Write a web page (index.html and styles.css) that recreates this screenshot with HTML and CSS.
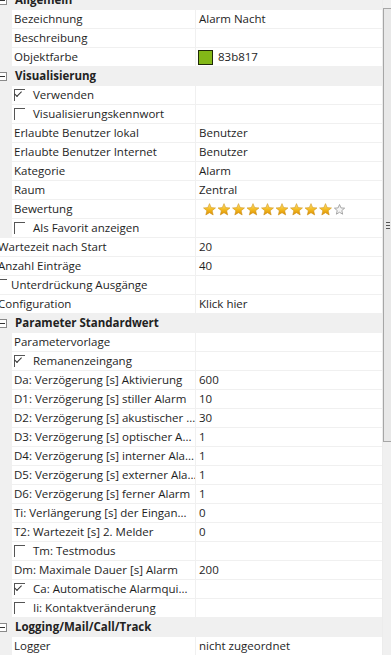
FILE: index.html
```html
<!DOCTYPE html>
<html lang="de">
<head>
  <meta charset="UTF-8">
  <title>Eigenschaften</title>
  <link rel="stylesheet" href="styles.css">
</head>
<body>

<svg width="0" height="0" class="defs">
  <defs>
    <linearGradient id="gold" x1="0" y1="0" x2="0" y2="1">
      <stop offset="0" stop-color="#fde27a"/>
      <stop offset="0.55" stop-color="#f3b81c"/>
      <stop offset="1" stop-color="#d98c06"/>
    </linearGradient>
    <polygon id="star" points="6.5,0.6 8.2,4.6 12.5,4.9 9.2,7.7 10.2,12 6.5,9.7 2.8,12 3.8,7.7 0.5,4.9 4.8,4.6"/>
  </defs>
</svg>

<div class="window">
  <div class="grid">

    <div class="row head"><span class="exp"></span><span class="htext">Allgemein</span></div>
    <div class="row"><div class="gut"></div><div class="label">Bezeichnung</div><div class="value">Alarm Nacht</div></div>
    <div class="row"><div class="gut"></div><div class="label">Beschreibung</div><div class="value"></div></div>
    <div class="row"><div class="gut"></div><div class="label">Objektfarbe</div><div class="value"><span class="swatch"></span>83b817</div></div>

    <div class="row head"><span class="exp"></span><span class="htext">Visualisierung</span></div>
    <div class="row"><div class="gut"></div><div class="label"><span class="cb on"></span>Verwenden</div><div class="value"></div></div>
    <div class="row"><div class="gut"></div><div class="label"><span class="cb"></span>Visualisierungskennwort</div><div class="value"></div></div>
    <div class="row"><div class="gut"></div><div class="label">Erlaubte Benutzer lokal</div><div class="value">Benutzer</div></div>
    <div class="row"><div class="gut"></div><div class="label">Erlaubte Benutzer Internet</div><div class="value">Benutzer</div></div>
    <div class="row"><div class="gut"></div><div class="label">Kategorie</div><div class="value">Alarm</div></div>
    <div class="row"><div class="gut"></div><div class="label">Raum</div><div class="value">Zentral</div></div>
    <div class="row"><div class="gut"></div><div class="label">Bewertung</div>
      <div class="value stars">
        <svg width="150" height="14" viewBox="0 0 150 14">
          <use href="#star" x="0" y="1" fill="url(#gold)" stroke="#c98a10" stroke-width="0.5"/>
          <use href="#star" x="14.5" y="1" fill="url(#gold)" stroke="#c98a10" stroke-width="0.5"/>
          <use href="#star" x="29" y="1" fill="url(#gold)" stroke="#c98a10" stroke-width="0.5"/>
          <use href="#star" x="43.5" y="1" fill="url(#gold)" stroke="#c98a10" stroke-width="0.5"/>
          <use href="#star" x="58" y="1" fill="url(#gold)" stroke="#c98a10" stroke-width="0.5"/>
          <use href="#star" x="72.5" y="1" fill="url(#gold)" stroke="#c98a10" stroke-width="0.5"/>
          <use href="#star" x="87" y="1" fill="url(#gold)" stroke="#c98a10" stroke-width="0.5"/>
          <use href="#star" x="101.5" y="1" fill="url(#gold)" stroke="#c98a10" stroke-width="0.5"/>
          <use href="#star" x="116" y="1" fill="url(#gold)" stroke="#c98a10" stroke-width="0.5"/>
          <use href="#star" x="131" y="2" fill="#f4f4f4" stroke="#9a9a9a" stroke-width="1" transform="translate(131 2) scale(0.85) translate(-131 -2)"/>
        </svg>
      </div>
    </div>
    <div class="row"><div class="gut"></div><div class="label"><span class="cb"></span>Als Favorit anzeigen</div><div class="value"></div></div>

    <div class="row flat"><div class="label">Wartezeit nach Start</div><div class="value">20</div></div>
    <div class="row flat"><div class="label">Anzahl Einträge</div><div class="value">40</div></div>
    <div class="row flat"><div class="label"><span class="cb"></span>Unterdrückung Ausgänge</div><div class="value"></div></div>
    <div class="row flat"><div class="label">Configuration</div><div class="value">Klick hier</div></div>

    <div class="row head"><span class="exp"></span><span class="htext">Parameter Standardwert</span></div>
    <div class="row"><div class="gut"></div><div class="label">Parametervorlage</div><div class="value"></div></div>
    <div class="row"><div class="gut"></div><div class="label"><span class="cb on"></span>Remanenzeingang</div><div class="value"></div></div>
    <div class="row"><div class="gut"></div><div class="label">Da: Verzögerung [s] Aktivierung</div><div class="value">600</div></div>
    <div class="row"><div class="gut"></div><div class="label">D1: Verzögerung [s] stiller Alarm</div><div class="value">10</div></div>
    <div class="row"><div class="gut"></div><div class="label">D2: Verzögerung [s] akustischer ...</div><div class="value">30</div></div>
    <div class="row"><div class="gut"></div><div class="label">D3: Verzögerung [s] optischer A...</div><div class="value">1</div></div>
    <div class="row"><div class="gut"></div><div class="label">D4: Verzögerung [s] interner Ala...</div><div class="value">1</div></div>
    <div class="row"><div class="gut"></div><div class="label">D5: Verzögerung [s] externer Ala...</div><div class="value">1</div></div>
    <div class="row"><div class="gut"></div><div class="label">D6: Verzögerung [s] ferner Alarm</div><div class="value">1</div></div>
    <div class="row"><div class="gut"></div><div class="label">Ti: Verlängerung [s] der Eingan...</div><div class="value">0</div></div>
    <div class="row"><div class="gut"></div><div class="label">T2: Wartezeit [s] 2. Melder</div><div class="value">0</div></div>
    <div class="row"><div class="gut"></div><div class="label"><span class="cb"></span>Tm: Testmodus</div><div class="value"></div></div>
    <div class="row"><div class="gut"></div><div class="label">Dm: Maximale Dauer [s] Alarm</div><div class="value">200</div></div>
    <div class="row"><div class="gut"></div><div class="label"><span class="cb on"></span>Ca: Automatische Alarmqui...</div><div class="value"></div></div>
    <div class="row"><div class="gut"></div><div class="label"><span class="cb"></span>Ii: Kontaktveränderung</div><div class="value"></div></div>

    <div class="row head"><span class="exp"></span><span class="htext">Logging/Mail/Call/Track</span></div>
    <div class="row"><div class="gut"></div><div class="label">Logger</div><div class="value">nicht zugeordnet</div></div>

  </div>

  <div class="scrollbar">
    <div class="arrow"></div>
    <div class="thumb"><span class="grip"></span></div>
  </div>
</div>

</body>
</html>
```
FILE: styles.css
```css
body {
  margin: 0;
  background: #ffffff;
  font-family: 'Open Sans', sans-serif;
  font-size: 11.5px;
  color: #1e1e1e;
  overflow: hidden;
}

.defs {
  position: absolute;
}

.window {
  display: flex;
  width: 391px;
  height: 655px;
  overflow: hidden;
}

.grid {
  flex: 1;
  margin-top: -9px;
  border-right: 1px solid #ececec;
  overflow: hidden;
}

.row {
  display: flex;
  height: 19px;
  line-height: 18px;
  border-bottom: 1px solid #f0f0f0;
  box-sizing: border-box;
}

.gut {
  width: 12px;
  flex: none;
  background: #f0f0f0;
}

.label {
  width: 184px;
  flex: none;
  padding-left: 2px;
  box-sizing: border-box;
  border-right: 1px solid #f0f0f0;
  white-space: nowrap;
  overflow: hidden;
  display: flex;
  align-items: center;
}

.value {
  flex: 1;
  padding-left: 3px;
  white-space: nowrap;
  display: flex;
  align-items: center;
}

.flat .label {
  width: 196px;
  padding-left: 0;
  text-indent: -2px;
}

.flat .cb {
  margin-left: -4px;
  margin-right: 6px;
}

.head {
  background: #f0f0f0;
  border-bottom: 1px solid #f0f0f0;
  align-items: center;
}

.htext {
  font-weight: bold;
  padding-left: 8px;
  color: #222;
}

.exp {
  width: 7px;
  height: 7px;
  margin-left: -2px;
  border: 1px solid #8a8a8a;
  position: relative;
  background: #fff;
}

.exp::after {
  content: "";
  position: absolute;
  left: 1px;
  right: 1px;
  top: 3px;
  height: 1px;
  background: #333;
}

.cb {
  width: 11px;
  height: 12px;
  flex: none;
  margin-right: 8px;
  border-top: 1px solid #555;
  border-left: 1px solid #555;
  position: relative;
  box-sizing: border-box;
}

.cb.on::after {
  content: "";
  position: absolute;
  left: 2px;
  top: 1px;
  width: 6px;
  height: 3px;
  border-left: 1px solid #333;
  border-bottom: 1px solid #333;
  transform: rotate(-45deg);
  transform-origin: left bottom;
  top: 3px;
}

.swatch {
  width: 13px;
  height: 13px;
  background: #83b817;
  border: 1px solid #1f2a08;
  margin-right: 5px;
  margin-left: -1px;
}

.stars {
  padding-left: 7px;
}

.stars svg {
  display: block;
}

.scrollbar {
  width: 8px;
  flex: none;
  background: #f0f0f0;
  display: flex;
  flex-direction: column;
}

.arrow {
  height: 8px;
  flex: none;
}

.thumb {
  height: 434px;
  background: #e8e8e8;
  border: 1px solid #a6a6a6;
  border-right: none;
  box-sizing: border-box;
  display: flex;
  align-items: center;
  justify-content: center;
}

.grip {
  width: 4px;
  height: 5px;
  border-top: 1px solid #555;
  border-bottom: 1px solid #555;
  position: relative;
}

.grip::after {
  content: "";
  position: absolute;
  left: 0;
  right: 0;
  top: 2px;
  height: 1px;
  background: #555;
}
```
